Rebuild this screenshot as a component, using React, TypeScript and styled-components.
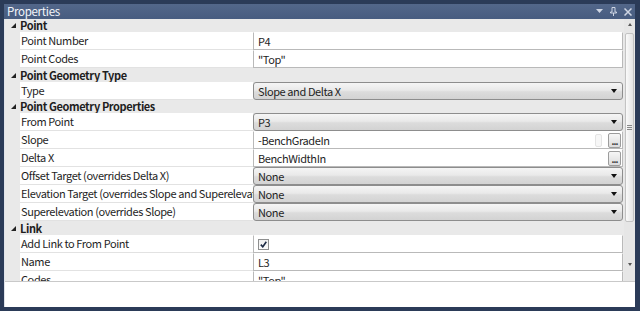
import styled, { createGlobalStyle } from 'styled-components';

const GlobalStyle = createGlobalStyle`
  body {
    margin: 0;
    font-family: 'Noto Sans CJK SC', 'Liberation Sans', sans-serif;
    font-size: 11px;
    letter-spacing: -0.4px;
    color: #1e1e1e;
  }
`;

const Frame = styled.div`
  width: 640px;
  height: 311px;
  box-sizing: border-box;
  background: #2b3b58;
  padding: 4px 5px 4px 4px;
  display: flex;
  flex-direction: column;
`;

const TitleBar = styled.div`
  height: 15px;
  flex: none;
  display: flex;
  align-items: center;
  padding: 0 3px 0 3px;
  background: linear-gradient(#53678a, #475c80);
  color: #f4f6fa;
  font-size: 11.5px;
  letter-spacing: -0.3px;
  line-height: 1;
`;

const TitleButtons = styled.div`
  margin-left: auto;
  display: flex;
  align-items: center;
  gap: 7px;

  svg {
    display: block;
  }
`;

const Body = styled.div`
  flex: 1;
  display: flex;
  flex-direction: column;
  background: #fff;
  border-left: 1px solid #dfe3ea;
`;

const GridArea = styled.div`
  height: 262px;
  flex: none;
  display: flex;
  border-bottom: 1px solid #c9c9c9;
  overflow: hidden;
`;

const Rows = styled.div`
  flex: 1;
  background: #e9e9e9;
  overflow: hidden;
`;

const Category = styled.div<{ $h: number }>`
  height: ${(p) => p.$h}px;
  display: grid;
  grid-template-columns: 15px 1fr;
  align-items: center;
  font-weight: bold;
  line-height: 1;
`;

const Expander = styled.span`
  display: flex;
  justify-content: center;
  padding-left: 2px;
`;

const Row = styled.div`
  height: 18px;
  display: grid;
  grid-template-columns: 15px 233px 1fr;
  padding-right: 1px;
`;

const Label = styled.div`
  background: #fff;
  border-bottom: 1px solid #e2e2e2;
  padding-left: 1px;
  display: flex;
  align-items: center;
  white-space: nowrap;
  overflow: hidden;
  line-height: 1;
`;

const Value = styled.div<{ $kind: string }>`
  box-sizing: border-box;
  display: flex;
  align-items: center;
  gap: 3px;
  padding: 0 1px 0 4px;
  line-height: 1;
  white-space: nowrap;
  background: ${(p) => (p.$kind === 'combo' ? 'linear-gradient(#f5f5f5, #e9e9e9 45%, #dcdcdc 55%, #d3d3d3)' : '#fff')};
  border: 1px solid ${(p) => (p.$kind === 'combo' ? '#8d8d8d' : '#b9b9b9')};
  border-top-color: ${(p) => (p.$kind === 'combo' ? '#8d8d8d' : 'transparent')};
  border-radius: ${(p) => (p.$kind === 'combo' ? '3px' : '0')};
`;

const ValueText = styled.span`
  flex: 1;
`;

const ComboArrow = styled.span`
  width: 0;
  height: 0;
  margin-right: 4px;
  border-left: 3.5px solid transparent;
  border-right: 3.5px solid transparent;
  border-top: 4px solid #111;
`;

const EllipsisButton = styled.span`
  width: 13px;
  height: 15px;
  box-sizing: border-box;
  border: 1px solid #9c9c9c;
  border-radius: 2px;
  background: linear-gradient(#f6f6f6, #dcdcdc);
  display: flex;
  justify-content: center;
  align-items: flex-end;
  font-size: 9px;
  font-weight: bold;
  letter-spacing: -1px;
  line-height: 10px;
  color: #333;
`;

const SpinStub = styled.span`
  width: 7px;
  height: 13px;
  box-sizing: border-box;
  border: 1px solid #e4e4e4;
  border-radius: 2px;
  background: #f7f7f7;
  margin-right: 3px;
`;

const Check = styled.span`
  width: 11px;
  height: 11px;
  box-sizing: border-box;
  border: 1px solid #8e8f8f;
  background: linear-gradient(#f0f0f0, #fbfbfb);
  display: flex;
  justify-content: center;
  align-items: center;
`;

const ScrollBar = styled.div`
  width: 11px;
  flex: none;
  background: #e6e6e6;
  display: flex;
  flex-direction: column;
  align-items: center;
  padding-top: 4px;
  box-sizing: border-box;
`;

const ScrollArrow = styled.span<{ $down?: boolean }>`
  width: 0;
  height: 0;
  border-left: 2.5px solid transparent;
  border-right: 2.5px solid transparent;
  ${(p) => (p.$down ? 'border-top: 3px solid #555;' : 'border-bottom: 3px solid #555;')}
`;

const Thumb = styled.div`
  margin-top: 7px;
  width: 9px;
  height: 189px;
  box-sizing: border-box;
  border: 1px solid #c3c3c3;
  border-radius: 2px;
  background: linear-gradient(90deg, #fafafa, #e3e3e3);
  display: flex;
  justify-content: center;
  align-items: center;
`;

const Grip = styled.span`
  width: 5px;
  height: 5px;
  border-top: 1px solid #888;
  border-bottom: 1px solid #888;
  box-sizing: border-box;
  position: relative;

  &::after {
    content: '';
    position: absolute;
    left: 0;
    right: 0;
    top: 1px;
    border-top: 1px solid #888;
  }
`;

const Track = styled.div`
  flex: 1;
`;

const DownSlot = styled.div`
  height: 18px;
  display: flex;
  align-items: flex-start;
  padding-top: 1px;
`;

const Description = styled.div`
  flex: 1;
  background: #fff;
`;

const Triangle = () => (
  <svg width="5" height="5" viewBox="0 0 5 5">
    <polygon points="5,0 5,5 0,5" fill="#222" />
  </svg>
);

type Prop = {
  label: string;
  kind: 'text' | 'combo' | 'check' | 'ellipsis' | 'spin';
  value?: string;
};

type Section = { title: string; h: number; props: Prop[] };

const sections: Section[] = [
  {
    title: 'Point',
    h: 13,
    props: [
      { label: 'Point Number', kind: 'text', value: 'P4' },
      { label: 'Point Codes', kind: 'text', value: '"Top"' },
    ],
  },
  {
    title: 'Point Geometry Type',
    h: 14,
    props: [{ label: 'Type', kind: 'combo', value: 'Slope and Delta X' }],
  },
  {
    title: 'Point Geometry Properties',
    h: 13,
    props: [
      { label: 'From Point', kind: 'combo', value: 'P3' },
      { label: 'Slope', kind: 'spin', value: '-BenchGradeIn' },
      { label: 'Delta X', kind: 'ellipsis', value: 'BenchWidthIn' },
      { label: 'Offset Target (overrides Delta X)', kind: 'combo', value: 'None' },
      { label: 'Elevation Target (overrides Slope and Superelevation)', kind: 'combo', value: 'None' },
      { label: 'Superelevation (overrides Slope)', kind: 'combo', value: 'None' },
    ],
  },
  {
    title: 'Link',
    h: 14,
    props: [
      { label: 'Add Link to From Point', kind: 'check' },
      { label: 'Name', kind: 'text', value: 'L3' },
      { label: 'Codes', kind: 'text', value: '"Top"' },
    ],
  },
];

const PropertyValue = ({ p }: { p: Prop }) => (
  <Value $kind={p.kind}>
    {p.kind === 'check' ? (
      <Check>
        <svg width="7" height="7" viewBox="0 0 7 7">
          <path d="M0.8 3.6 L2.8 5.8 L6.3 0.8" stroke="#1c2a44" strokeWidth="1.6" fill="none" />
        </svg>
      </Check>
    ) : (
      <ValueText>{p.value}</ValueText>
    )}
    {p.kind === 'combo' && <ComboArrow />}
    {p.kind === 'spin' && <SpinStub />}
    {(p.kind === 'spin' || p.kind === 'ellipsis') && <EllipsisButton>...</EllipsisButton>}
  </Value>
);

const App = () => (
  <>
    <GlobalStyle />
    <Frame>
      <TitleBar>
        Properties
        <TitleButtons>
          <svg width="7" height="5" viewBox="0 0 7 5">
            <polygon points="0,0 7,0 3.5,4" fill="#cfd6e4" />
          </svg>
          <svg width="7" height="9" viewBox="0 0 7 9">
            <path d="M2 0.5 H5 V5 H6.5 V6 H0.5 V5 H2 Z M3.5 6 V9" stroke="#cfd6e4" strokeWidth="1" fill="none" />
          </svg>
          <svg width="8" height="8" viewBox="0 0 8 8">
            <path d="M0.5 0.5 L7.5 7.5 M7.5 0.5 L0.5 7.5" stroke="#cfd6e4" strokeWidth="1.5" />
          </svg>
        </TitleButtons>
      </TitleBar>
      <Body>
        <GridArea>
          <Rows>
            {sections.map((s) => (
              <div key={s.title}>
                <Category $h={s.h}>
                  <Expander>
                    <Triangle />
                  </Expander>
                  {s.title}
                </Category>
                {s.props.map((p) => (
                  <Row key={p.label}>
                    <span />
                    <Label>{p.label}</Label>
                    <PropertyValue p={p} />
                  </Row>
                ))}
              </div>
            ))}
          </Rows>
          <ScrollBar>
            <ScrollArrow />
            <Thumb>
              <Grip />
            </Thumb>
            <Track />
            <DownSlot>
              <ScrollArrow $down />
            </DownSlot>
          </ScrollBar>
        </GridArea>
        <Description />
      </Body>
    </Frame>
  </>
);

export default App;
